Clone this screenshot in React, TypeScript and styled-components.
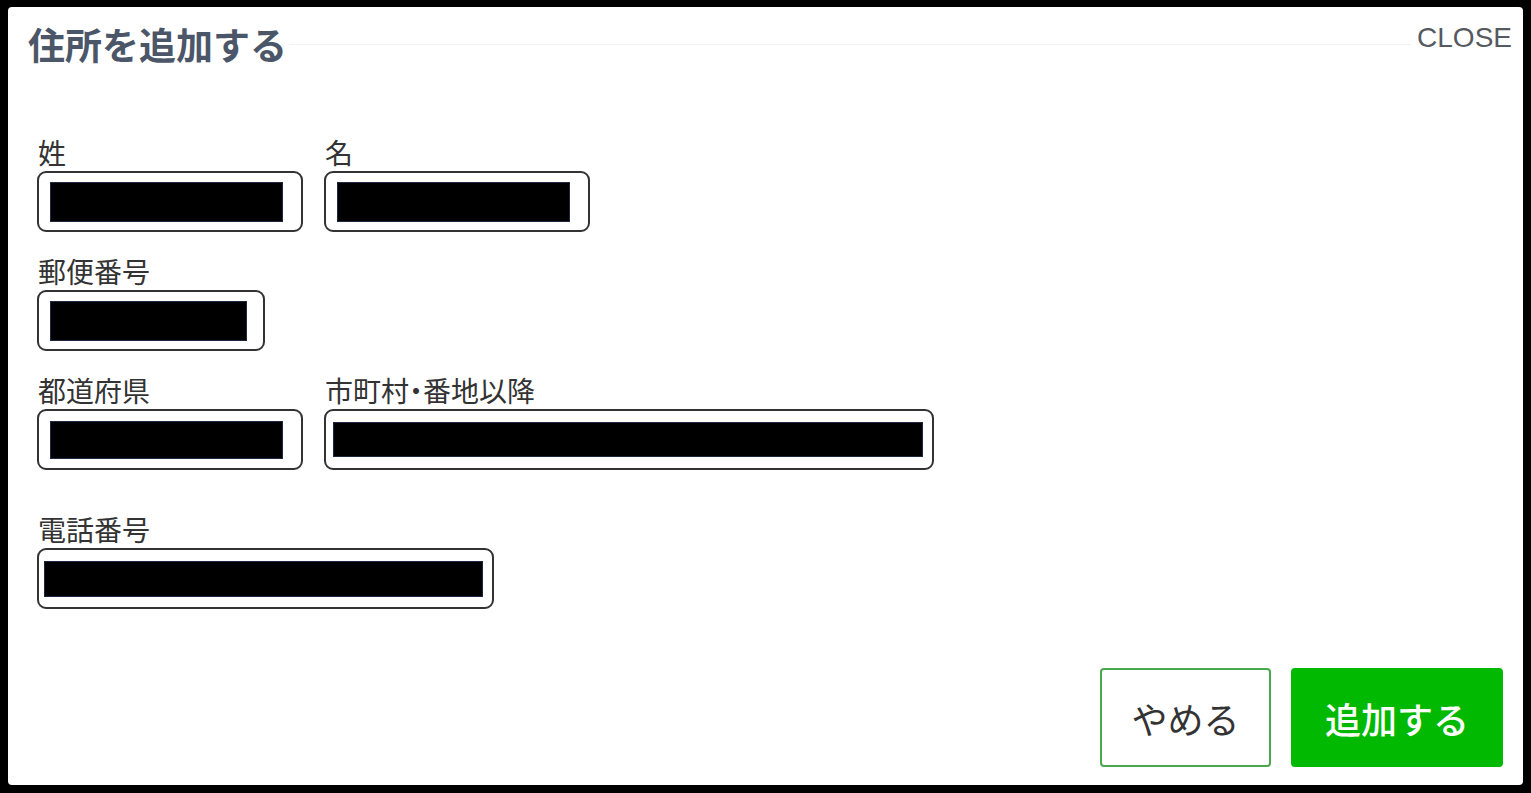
import styled, { createGlobalStyle } from "styled-components";

const GlobalStyle = createGlobalStyle`
  html, body {
    margin: 0;
    padding: 0;
    background: #000;
  }
  * {
    box-sizing: border-box;
  }
`;

const Frame = styled.div`
  width: 1531px;
  height: 793px;
  background: #000;
  padding: 7px 8px 8px 8px;
`;

const Modal = styled.div`
  height: 100%;
  background: #fff;
  border-radius: 4px;
  display: flex;
  flex-direction: column;
  font-family: "Noto Sans CJK JP", "Noto Sans", sans-serif;
`;

const Header = styled.div`
  display: flex;
  align-items: flex-start;
  padding: 17px 11px 0 20px;
`;

const Title = styled.h2`
  margin: 2px 0 0;
  font-size: 37px;
  line-height: 37px;
  font-weight: 700;
  color: #4b5769;
`;

const HeaderRule = styled.div`
  flex: 1;
  height: 1px;
  margin: 20px 6px 0 2px;
  background: #f1f1f1;
`;

const CloseLink = styled.button`
  border: none;
  background: none;
  padding: 0;
  font-family: "Liberation Sans", Arial, sans-serif;
  font-size: 28px;
  line-height: 28px;
  color: #555a60;
  cursor: pointer;
`;

const Body = styled.div`
  display: flex;
  flex-direction: column;
  padding: 75px 0 0 29px;
`;

const Row = styled.div<{ $gap?: number }>`
  display: flex;
  gap: 21px;
  margin-top: ${(p) => p.$gap ?? 0}px;
`;

const Field = styled.label`
  display: flex;
  flex-direction: column;
`;

const Label = styled.span`
  font-size: 28px;
  line-height: 28px;
  color: #333;
  margin-bottom: 5px;
  padding-left: 1px;
  font-feature-settings: "palt";
`;

const InputBox = styled.div<{ $width: number; $inset: number }>`
  width: ${(p) => p.$width}px;
  height: 61px;
  border: 2px solid #333;
  border-radius: 9px;
  display: flex;
  align-items: center;
  padding-left: ${(p) => p.$inset}px;
`;

const Redacted = styled.div<{ $width: number; $height: number }>`
  width: ${(p) => p.$width}px;
  height: ${(p) => p.$height}px;
  background: #000;
  border: 1px solid #1d2740;
`;

const Actions = styled.div`
  display: flex;
  justify-content: flex-end;
  gap: 20px;
  padding-right: 20px;
  margin-top: 59px;
`;

const Button = styled.button<{ $primary?: boolean }>`
  height: 99px;
  width: ${(p) => (p.$primary ? 212 : 171)}px;
  border-radius: 4px;
  border: 2px solid ${(p) => (p.$primary ? "#00b900" : "#4aa84a")};
  background: ${(p) => (p.$primary ? "#00b900" : "#fff")};
  color: ${(p) => (p.$primary ? "#fff" : "#333")};
  font-family: "Noto Sans CJK JP", sans-serif;
  font-size: 36px;
  font-weight: ${(p) => (p.$primary ? 500 : 400)};
  cursor: pointer;
`;

type FieldDef = {
  label: string;
  width: number;
  inset: number;
  red: [number, number];
};

const rows: { gap: number; fields: FieldDef[] }[] = [
  {
    gap: 0,
    fields: [
      { label: "姓", width: 266, inset: 11, red: [233, 40] },
      { label: "名", width: 266, inset: 11, red: [233, 40] },
    ],
  },
  {
    gap: 25,
    fields: [{ label: "郵便番号", width: 228, inset: 11, red: [197, 40] }],
  },
  {
    gap: 25,
    fields: [
      { label: "都道府県", width: 266, inset: 11, red: [233, 38] },
      { label: "市町村・番地以降", width: 610, inset: 7, red: [590, 35] },
    ],
  },
  {
    gap: 45,
    fields: [{ label: "電話番号", width: 457, inset: 5, red: [439, 36] }],
  },
];

export default function App() {
  return (
    <Frame>
      <GlobalStyle />
      <Modal>
        <Header>
          <Title>住所を追加する</Title>
          <HeaderRule />
          <CloseLink>CLOSE</CloseLink>
        </Header>
        <Body>
          {rows.map((row, i) => (
            <Row key={i} $gap={row.gap}>
              {row.fields.map((f) => (
                <Field key={f.label}>
                  <Label>{f.label}</Label>
                  <InputBox $width={f.width} $inset={f.inset}>
                    <Redacted $width={f.red[0]} $height={f.red[1]} />
                  </InputBox>
                </Field>
              ))}
            </Row>
          ))}
        </Body>
        <Actions>
          <Button>やめる</Button>
          <Button $primary>追加する</Button>
        </Actions>
      </Modal>
    </Frame>
  );
}
